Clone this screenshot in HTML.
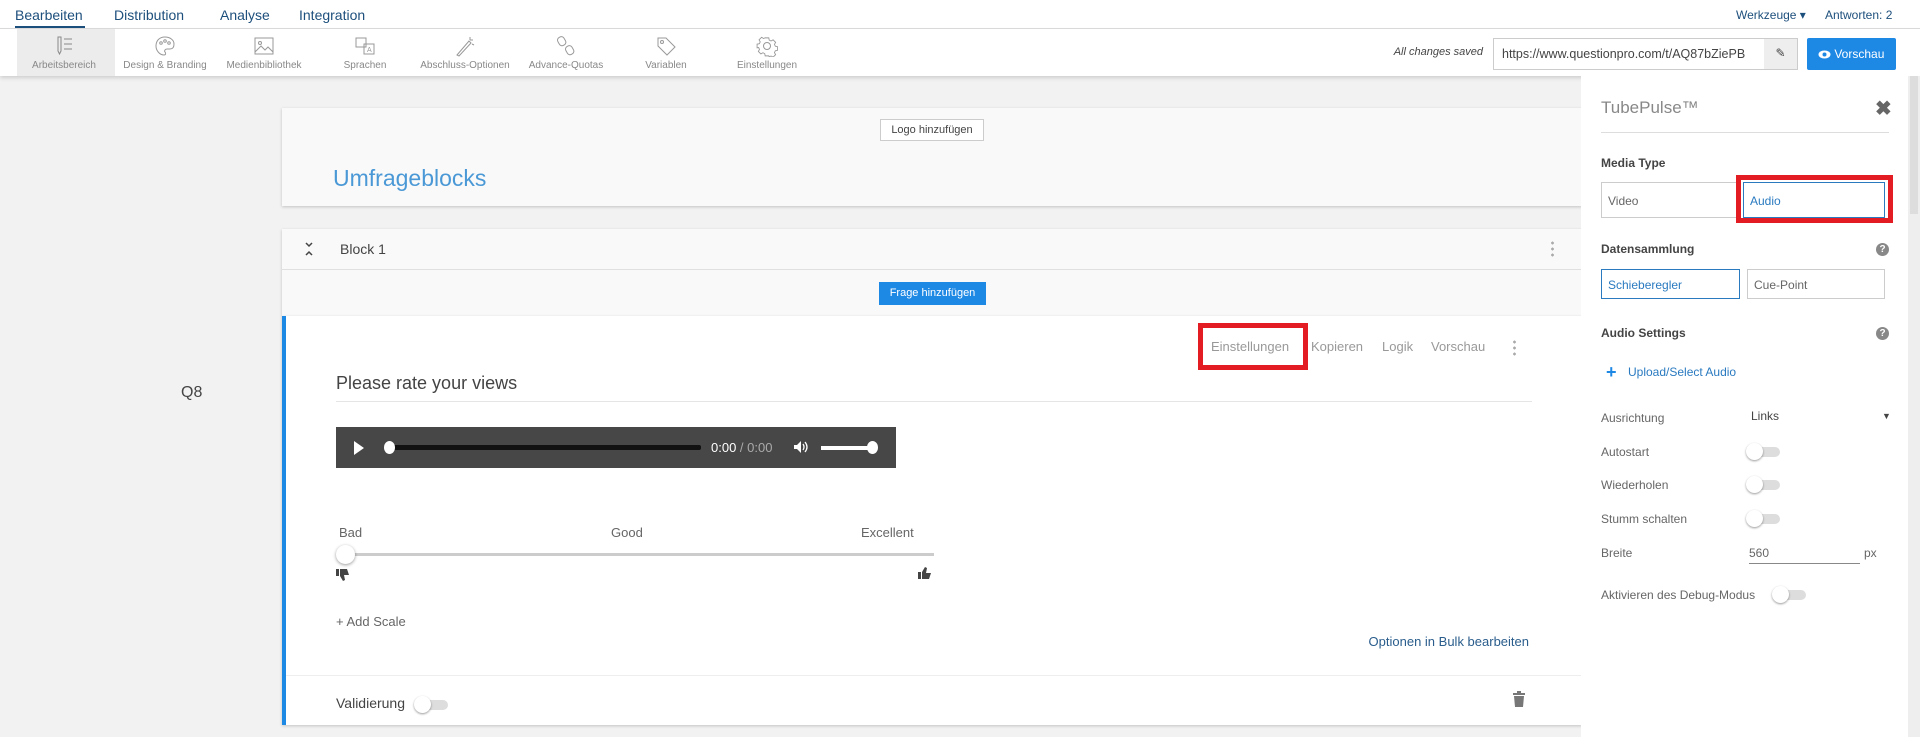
<!DOCTYPE html>
<html><head><meta charset="utf-8"><style>
*{margin:0;padding:0;box-sizing:border-box}
body{width:1920px;height:737px;overflow:hidden;background:#f2f2f2;font-family:"Liberation Sans",sans-serif;position:relative;color:#555}
.a{position:absolute;white-space:nowrap}
.nav{left:0;top:0;width:1920px;height:29px;background:#fff;border-bottom:1px solid #ddd}
.tab{font-size:14px;color:#1d4f7c;top:7px}
.tb{left:0;top:29px;width:1920px;height:47px;background:#fff;box-shadow:0 2px 4px rgba(0,0,0,.15)}
.it{top:29px;width:100px;height:47px;text-align:center;font-size:10px;color:#888}
.it svg{position:absolute;left:39px;top:6px}
.it span{position:absolute;left:0;right:0;top:31px}
.card{background:#f9f9f9;box-shadow:0 1px 3px rgba(0,0,0,.2)}
.panel{left:1581px;top:76px;width:327px;height:661px;background:#fff}
.lbl{font-size:12px;color:#666}
.bold{font-size:12px;font-weight:bold;color:#444}
.inp{border:1px solid #ccc;height:30px;font-size:12px;padding:8px 6px;color:#666}
.tg{width:32px;height:10px;background:#ddd;border-radius:5px}
.tg:before{content:"";position:absolute;left:-2px;top:-4px;width:17px;height:17px;border-radius:50%;background:#fff;box-shadow:0 1px 2px rgba(0,0,0,.4)}
</style></head><body>
<div class="a nav"></div>
<div class="a tab" style="left:15px">Bearbeiten</div>
<div class="a" style="left:15px;top:26px;width:70px;height:2px;background:#1d4f7c"></div>
<div class="a tab" style="left:114px">Distribution</div>
<div class="a tab" style="left:220px">Analyse</div>
<div class="a tab" style="left:299px">Integration</div>
<div class="a tab" style="left:1736px;font-size:12px;top:8px">Werkzeuge ▾</div>
<div class="a tab" style="left:1825px;font-size:12px;top:8px">Antworten: 2</div>

<div class="a tb"></div>
<div class="a" style="left:17px;top:29px;width:98px;height:47px;background:#ececec"></div>
<div class="a it" style="left:14px"><svg width="22" height="22" viewBox="0 0 22 22" fill="none" stroke="#888"><path d="M5 2v14l1.5 3 1.5-3V2zM11 4h8M11 9h8M11 14h8"/></svg><span>Arbeitsbereich</span></div>
<div class="a it" style="left:115px"><svg width="22" height="22" viewBox="0 0 22 22" fill="none" stroke="#999"><path d="M11 2C5 2 2 6 2 11s4 9 8 9c2 0 2-2 1-3s0-3 2-3h3c3 0 4-2 4-5 0-4-4-7-9-7z"/><circle cx="7" cy="8" r="1.3"/><circle cx="11" cy="6" r="1.3"/><circle cx="15" cy="8" r="1.3"/></svg><span>Design &amp; Branding</span></div>
<div class="a it" style="left:214px"><svg width="22" height="22" viewBox="0 0 22 22" fill="none" stroke="#999"><rect x="2" y="3" width="18" height="16"/><path d="M2 17l6-6 4 4 3-3 5 5"/><circle cx="7" cy="8" r="1.5"/></svg><span>Medienbibliothek</span></div>
<div class="a it" style="left:315px"><svg width="22" height="22" viewBox="0 0 22 22" fill="none" stroke="#999"><rect x="2" y="3" width="10" height="9"/><rect x="10" y="9" width="10" height="10"/><text x="13" y="17" font-size="7" fill="#999" stroke="none">A</text></svg><span>Sprachen</span></div>
<div class="a it" style="left:415px"><svg width="22" height="22" viewBox="0 0 22 22" fill="none" stroke="#999"><path d="M3 20L15 6l2 2L5 21zM16 2v3M19 5h-3M18 9l2 1"/></svg><span>Abschluss-Optionen</span></div>
<div class="a it" style="left:516px"><svg width="22" height="22" viewBox="0 0 22 22" fill="none" stroke="#999"><rect x="3" y="2" width="7" height="9" rx="3" transform="rotate(-30 6 6)"/><rect x="11" y="11" width="7" height="9" rx="3" transform="rotate(-30 14 15)"/></svg><span>Advance-Quotas</span></div>
<div class="a it" style="left:616px"><svg width="22" height="22" viewBox="0 0 22 22" fill="none" stroke="#999"><path d="M3 3h8l9 9-8 8-9-9z"/><circle cx="7" cy="7" r="1.5"/></svg><span>Variablen</span></div>
<div class="a it" style="left:717px"><svg width="22" height="22" viewBox="0 0 22 22" fill="none" stroke="#999"><circle cx="11" cy="11" r="3.5"/><path d="M9 2h4l.5 2.5 2 1 2.3-1.3 2.8 2.8-1.3 2.3 1 2 2.5.5v4l-2.5.5-1 2 1.3 2.3-2.8 2.8-2.3-1.3-2 1L13 22H9l-.5-2.5-2-1-2.3 1.3-2.8-2.8 1.3-2.3-1-2L0 13V9l2.5-.5 1-2-1.3-2.3 2.8-2.8 2.3 1.3 2-1z" transform="scale(.9) translate(1.2 1.2)"/></svg><span>Einstellungen</span></div>

<div class="a" style="left:1380px;top:46px;width:103px;text-align:right;font-size:11px;font-style:italic;color:#444">All changes saved</div>
<div class="a" style="left:1493px;top:38px;width:305px;height:32px;border:1px solid #ccc;background:#fff"></div>
<div class="a" style="left:1502px;top:47px;font-size:12.5px;color:#444">https://www.questionpro.com/t/AQ87bZiePB</div>
<div class="a" style="left:1764px;top:39px;width:33px;height:30px;background:#eee;text-align:center;font-size:12px;padding-top:7px;color:#444">✎</div>
<div class="a" style="left:1807px;top:38px;width:89px;height:32px;background:#1e88e5;border-radius:2px;color:#fff;font-size:12px;padding:9px 0 0 11px"><svg width="13" height="9" viewBox="0 0 13 9" style="vertical-align:-1px"><ellipse cx="6.5" cy="4.5" rx="6" ry="4" fill="#fff"/><circle cx="6.5" cy="4.5" r="2" fill="#1e88e5"/></svg> Vorschau</div>

<div class="a" style="left:1908px;top:76px;width:12px;height:661px;background:#eee"></div>
<div class="a" style="left:1910px;top:76px;width:8px;height:138px;background:#ddd"></div>

<div class="a" style="left:181px;top:384px;font-size:16px;color:#444">Q8</div>

<div class="a card" style="left:282px;top:108px;width:1300px;height:98px"></div>
<div class="a" style="left:880px;top:119px;width:104px;height:22px;border:1px solid #ccc;background:#fff;font-size:11px;color:#444;text-align:center;padding-top:4px">Logo hinzufügen</div>
<div class="a" style="left:333px;top:165px;font-size:23px;color:#4a98d6">Umfrageblocks</div>

<div class="a card" style="left:282px;top:229px;width:1300px;height:87px"></div>
<div class="a" style="left:282px;top:269px;width:1300px;height:1px;background:#e0e0e0"></div>
<svg class="a" style="left:303px;top:241px" width="12" height="16" viewBox="0 0 12 16" fill="none" stroke="#444" stroke-width="1.5"><path d="M3 2l3 3 3-3M3 14l3-3 3 3"/></svg>
<div class="a" style="left:340px;top:241px;font-size:14px;color:#444">Block 1</div>
<div class="a" style="left:1551px;top:240px;width:3px;height:18px;background:radial-gradient(circle,#aaa 1.3px,transparent 1.5px) 0 0/3px 6px"></div>
<div class="a" style="left:879px;top:282px;width:107px;height:23px;background:#1e88e5;color:#fff;font-size:11px;text-align:center;padding-top:5px">Frage hinzufügen</div>

<div class="a" style="left:282px;top:316px;width:1300px;height:409px;background:#fff;box-shadow:0 1px 3px rgba(0,0,0,.2)"></div>
<div class="a" style="left:282px;top:316px;width:4px;height:409px;background:#1e88e5"></div>
<div class="a" style="left:1198px;top:323px;width:110px;height:47px;border:5px solid #e31b23"></div>
<div class="a" style="top:339px;left:1211px;font-size:13px;color:#999">Einstellungen</div>
<div class="a" style="top:339px;left:1311px;font-size:13px;color:#999">Kopieren</div>
<div class="a" style="top:339px;left:1382px;font-size:13px;color:#999">Logik</div>
<div class="a" style="top:339px;left:1431px;font-size:13px;color:#999">Vorschau</div>
<div class="a" style="left:1513px;top:339px;width:3px;height:18px;background:radial-gradient(circle,#aaa 1.3px,transparent 1.5px) 0 0/3px 6px"></div>
<div class="a" style="left:336px;top:373px;font-size:18px;color:#444">Please rate your views</div>
<div class="a" style="left:336px;top:401px;width:1196px;height:1px;background:#e5e5e5"></div>

<div class="a" style="left:336px;top:427px;width:560px;height:41px;background:#474747"></div>
<div class="a" style="left:354px;top:441px;width:0;height:0;border-left:10px solid #fff;border-top:7px solid transparent;border-bottom:7px solid transparent"></div>
<div class="a" style="left:386px;top:445px;width:315px;height:5px;background:#111;border-radius:2px"></div>
<div class="a" style="left:384px;top:441px;width:11px;height:13px;border-radius:50%;background:#fff"></div>
<div class="a" style="left:711px;top:440px;font-size:13px;color:#fff">0:00 <span style="color:#aaa">/ 0:00</span></div>
<svg class="a" style="left:793px;top:440px" width="16" height="14" viewBox="0 0 16 14" fill="none"><path d="M1 5h3l4-4v12l-4-4H1z" fill="#fff"/><path d="M10 4q2 3 0 6M12 2q4 5 0 10" stroke="#fff" stroke-width="1.3"/></svg>
<div class="a" style="left:821px;top:446px;width:54px;height:4px;background:#fff"></div>
<div class="a" style="left:867px;top:441px;width:11px;height:13px;border-radius:50%;background:#fff"></div>

<div class="a" style="left:339px;top:525px;font-size:13px;color:#666">Bad</div>
<div class="a" style="left:611px;top:525px;font-size:13px;color:#666">Good</div>
<div class="a" style="left:861px;top:525px;font-size:13px;color:#666">Excellent</div>
<div class="a" style="left:338px;top:553px;width:596px;height:3px;background:#ccc"></div>
<div class="a" style="left:336px;top:545px;width:19px;height:19px;border-radius:50%;background:#fff;box-shadow:0 1px 3px rgba(0,0,0,.4)"></div>
<svg class="a" style="left:336px;top:568px" width="14" height="14" viewBox="0 0 14 14" fill="#444"><rect x="0" y="1" width="3" height="7"/><path d="M4 1h7l2 6h-5l1 5-2 1-3-5z"/></svg>
<svg class="a" style="left:918px;top:566px" width="14" height="14" viewBox="0 0 14 14" fill="#444"><rect x="0" y="6" width="3" height="7"/><path d="M4 13h7l2-6h-5l1-5-2-1-3 5z"/></svg>
<div class="a" style="left:336px;top:614px;font-size:13px;color:#666">+ Add Scale</div>
<div class="a" style="left:1350px;top:634px;width:179px;text-align:right;font-size:13px;color:#2a5d8c">Optionen in Bulk bearbeiten</div>
<div class="a" style="left:286px;top:675px;width:1295px;height:1px;background:#eee"></div>
<div class="a" style="left:336px;top:695px;font-size:14px;color:#444">Validierung</div>
<div class="a tg" style="left:416px;top:700px"></div>
<svg class="a" style="left:1513px;top:691px" width="12" height="16" viewBox="0 0 12 16" fill="#777"><rect x="0" y="2" width="12" height="2"/><rect x="4" y="0" width="4" height="2"/><path d="M1 5h10l-1 11H2z"/></svg>

<div class="a panel"></div>
<div class="a" style="left:1601px;top:98px;font-size:17px;color:#888">TubePulse™</div>
<div class="a" style="left:1875px;top:96px;font-size:20px;color:#666;font-weight:bold">✖</div>
<div class="a" style="left:1601px;top:132px;width:288px;height:1px;background:#ddd"></div>
<div class="a bold" style="left:1601px;top:156px">Media Type</div>
<div class="a inp" style="left:1601px;top:182px;width:140px;height:36px;padding-top:11px">Video</div>
<div class="a" style="left:1736px;top:175px;width:157px;height:48px;border:5px solid #e31b23"></div>
<div class="a inp" style="left:1743px;top:182px;width:142px;height:36px;padding-top:11px;border-color:#2a7ac0;color:#2a7ac0">Audio</div>
<div class="a bold" style="left:1601px;top:242px">Datensammlung</div>
<div class="a" style="left:1876px;top:243px;width:13px;height:13px;border-radius:50%;background:#888;color:#fff;font-size:10px;text-align:center;line-height:13px;font-weight:bold">?</div>
<div class="a inp" style="left:1601px;top:269px;width:139px;border-color:#2a7ac0;color:#2a7ac0">Schieberegler</div>
<div class="a inp" style="left:1747px;top:269px;width:138px">Cue-Point</div>
<div class="a bold" style="left:1601px;top:326px">Audio Settings</div>
<div class="a" style="left:1876px;top:327px;width:13px;height:13px;border-radius:50%;background:#888;color:#fff;font-size:10px;text-align:center;line-height:13px;font-weight:bold">?</div>
<div class="a" style="left:1606px;top:362px;font-size:18px;font-weight:bold;color:#1e88e5">+</div>
<div class="a" style="left:1628px;top:365px;font-size:12px;color:#2a7ac0">Upload/Select Audio</div>
<div class="a lbl" style="left:1601px;top:411px">Ausrichtung</div>
<div class="a" style="left:1751px;top:409px;font-size:12px;color:#444">Links</div>
<div class="a" style="left:1882px;top:411px;font-size:9px;color:#444">▼</div>
<div class="a lbl" style="left:1601px;top:445px">Autostart</div>
<div class="a tg" style="left:1748px;top:447px"></div>
<div class="a lbl" style="left:1601px;top:478px">Wiederholen</div>
<div class="a tg" style="left:1748px;top:480px"></div>
<div class="a lbl" style="left:1601px;top:512px">Stumm schalten</div>
<div class="a tg" style="left:1748px;top:514px"></div>
<div class="a lbl" style="left:1601px;top:546px">Breite</div>
<div class="a lbl" style="left:1749px;top:546px">560</div>
<div class="a" style="left:1749px;top:563px;width:111px;height:1px;background:#888"></div>
<div class="a lbl" style="left:1864px;top:546px">px</div>
<div class="a lbl" style="left:1601px;top:588px">Aktivieren des Debug-Modus</div>
<div class="a tg" style="left:1774px;top:590px"></div>
</body></html>
